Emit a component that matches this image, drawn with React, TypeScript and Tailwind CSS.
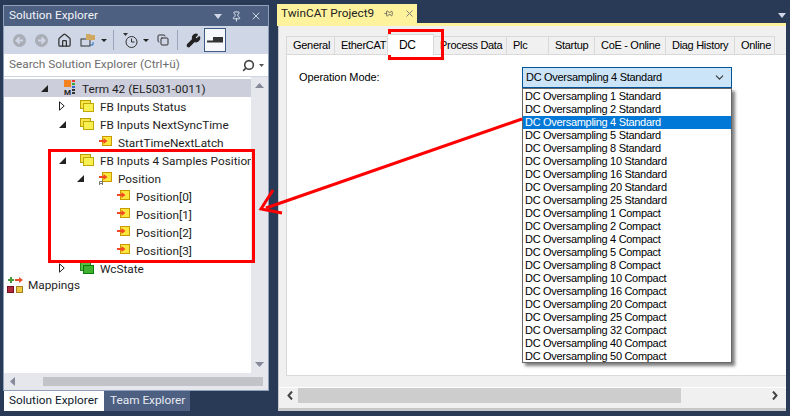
import React from 'react';
import { ChevronDown, Home, Wrench, Search, X, Pin, Copy } from 'lucide-react';

const modes = ['1 Standard', '2 Standard', '4 Standard', '5 Standard', '8 Standard', '10 Standard', '16 Standard', '20 Standard', '25 Standard', '1 Compact', '2 Compact', '4 Compact', '5 Compact', '8 Compact', '10 Compact', '16 Compact', '20 Compact', '25 Compact', '32 Compact', '40 Compact', '50 Compact'];
const tabs = [['General', 'w-[49px]'], ['EtherCAT', 'w-[55px]'], ['DC', ''], ['Process Data', 'w-[74px]'], ['Plc', 'w-[43px]'], ['Startup', 'w-[47px]'], ['CoE - Online', 'w-[72px]'], ['Diag History', 'w-[70px]'], ['Online', 'w-[41px]']];

const Folder = ({ green = false }: { green?: boolean }) => (
  <svg width="15" height="14" viewBox="0 0 15 14" className="shrink-0">
    <rect x=".5" y="1.500" width="10" height="8" fill={green ? '#58c040' : '#f5e44a'} stroke={green ? '#1c8a1c' : '#b8a000'} />
    <rect x="3.500" y="4.500" width="10" height="8" fill={green ? '#40b030' : '#f8f050'} stroke={green ? '#0c7a0c' : '#c0a800'} />
  </svg>
);

const Signal = ({ bound = false }: { bound?: boolean }) => (
  <svg width="13" height="14" viewBox="0 0 13 14" className="shrink-0">
    <rect x="3.500" y="1.500" width="9" height="9" fill="#fbe73c" stroke="#c89a00" />
    <path d="M0 5h4.500V3l4 3-4 3V7H0z" fill="#f04a22" />
    {bound && <path d="M.5 14v-3.500h3V14M.5 12.500h3" fill="none" stroke="#777" />}
  </svg>
);

const Caret = ({ open }: { open: boolean }) => open ? (
  <svg width="7" height="7" viewBox="0 0 7 7" className="shrink-0"><path d="M7 0v7H0z" fill="#222" /></svg>
) : (
  <svg width="6" height="10" viewBox="0 0 6 10" className="shrink-0"><path d="M.5.8v8.400L5.200 5z" fill="#fff" stroke="#222" /></svg>
);

const Row = ({ indent, caret, icon, label, active }: { indent: string; caret?: 'open' | 'closed'; icon: React.ReactNode; label: string; active?: boolean }) => (
  <div className={`h-[18px] flex items-center whitespace-nowrap ${active ? 'bg-[#cccedb]' : ''}`}>
    <div className={`flex items-center justify-center shrink-0 w-[10px] ${indent}`}>
      {caret && <Caret open={caret === 'open'} />}
    </div>
    <div className="ml-[12px] mr-[5px] flex items-center justify-center w-[16px] shrink-0">{icon}</div>
    <span className="pt-[4px]">{label}</span>
  </div>
);

const Nav = ({ d, cls }: { d: string; cls: string }) => (
  <svg width="13" height="13" viewBox="0 0 13 13" className={cls}>
    <circle cx="6.500" cy="6.500" r="6.500" fill="#a9adb5" />
    <path d={d} stroke="#cfd6e5" strokeWidth="2" fill="none" />
  </svg>
);

export default function App() {
  return (
    <div className="relative w-[790px] h-[416px] overflow-hidden bg-[#293a56] flex font-['Roboto',sans-serif] text-[11.8px] text-[#1e1e1e]">
      {/* solution explorer */}
      <div className="w-[266px] ml-[3px] mt-[5px] h-[406px] flex flex-col shrink-0">
        <div className="h-[21px] bg-[#4d6082] text-white flex items-center pl-[5px] pr-[6px] border-x border-t border-[#8fa0bb] shrink-0">
          <span className="text-[#f2f4f8]">Solution Explorer</span>
          <svg width="8" height="5" viewBox="0 0 8 5" className="ml-auto mr-[9px]"><path d="M0 0h8L4 5z" fill="#cfd6e5" /></svg>
          <Pin size={11} className="text-[#e6eaf2] mr-[8px]" />
          <X size={12} className="text-[#cfd6e5]" />
        </div>
        <div className="flex-1 flex flex-col bg-white border-x border-b border-[#8fa0bb] min-h-0">
          <div className="h-[28px] bg-[#cfd6e5] flex items-center pl-[9px] shrink-0">
            <Nav d="M10 6.500H4M6.500 3.500l-3 3 3 3" cls="mr-[9px]" />
            <Nav d="M3 6.500h6M6.500 3.500l3 3-3 3" cls="mr-[9px]" />
            <Home size={15} className="text-[#333] mr-[8px]" />
            <svg width="16" height="15" viewBox="0 0 16 15" className="mr-[5px]"><rect x="1" y="6" width="9" height="7" fill="none" stroke="#333" /><path d="M6 1h4l1 1h4v5H6z" fill="#d0a860" /><path d="M13 9v3h-3" stroke="#1f6fc0" fill="none" /></svg>
            <svg width="6" height="3" viewBox="0 0 6 3" className="mr-[6px]"><path d="M0 0h6L3 3z" fill="#222" /></svg>
            <div className="w-px h-[20px] bg-[#9aa5ba] mr-[9px]" />
            <svg width="15" height="17" viewBox="0 0 15 17" className="mr-[5px]">
              <path d="M0 1h5L2.500 4z" fill="#333" />
              <circle cx="8.500" cy="10" r="5.500" fill="none" stroke="#333" />
              <path d="M8.500 6.500V10h3" fill="none" stroke="#333" />
            </svg>
            <svg width="6" height="3" viewBox="0 0 6 3" className="mr-[8px]"><path d="M0 0h6L3 3z" fill="#222" /></svg>
            <Copy size={12} className="text-[#333] mr-[8px]" />
            <div className="w-px h-[20px] bg-[#9aa5ba] mr-[8px]" />
            <Wrench size={15} className="text-[#222] fill-[#222] mr-[3px]" />
            <div className="w-[22px] h-[24px] bg-[#f5f7fb] border border-[#3f5c85] flex items-center justify-center">
              <svg width="16" height="6" viewBox="0 0 16 6"><path d="M0 3.500h6v2H0zM6 0h10v5.500H6z" fill="#333" /></svg>
            </div>
          </div>
          <div className="h-[23px] bg-white flex items-center pl-[5px] pr-[4px] border-b border-[#cfd6e5] shrink-0">
            <span className="text-[#6d6d6d]">Search Solution Explorer (Ctrl+ü)</span>
            <Search size={13} strokeWidth={3} className="ml-auto text-[#444] -scale-x-100 mr-[4px]" />
            <svg width="5" height="3" viewBox="0 0 5 3"><path d="M0 0h5L2.500 3z" fill="#555" /></svg>
          </div>
          <div className="flex-1 flex min-h-0">
            <div className="flex-1 pt-[2px] min-w-0">
              <Row indent="ml-[35px]" caret="open" active label="Term 42 (EL5031-0011)" icon={
                <svg width="11" height="16" viewBox="0 0 11 16"><rect width="7" height="7" fill="#f58220" /><rect x="8" width="3" height="2" fill="#e33" /><rect x="8" y="3" width="3" height="2" fill="#3a3" /><rect x="8" y="6" width="3" height="2" fill="#36c" /><rect x="8" y="9" width="3" height="2" fill="#333" /><rect x="8" y="12" width="3" height="2" fill="#333" /><text x="0" y="15" fontSize="8" fontWeight="700" fill="#222">M</text></svg>
              } />
              <Row indent="ml-[53px]" caret="closed" icon={<Folder />} label="FB Inputs Status" />
              <Row indent="ml-[53px]" caret="open" icon={<Folder />} label="FB Inputs NextSyncTime" />
              <Row indent="ml-[71px]" icon={<Signal />} label="StartTimeNextLatch" />
              <Row indent="ml-[53px]" caret="open" icon={<Folder />} label="FB Inputs 4 Samples Position" />
              <Row indent="ml-[71px]" caret="open" icon={<Signal bound />} label="Position" />
              {[0, 1, 2, 3].map(i => <Row key={i} indent="ml-[89px]" icon={<Signal />} label={`Position[${i}]`} />)}
              <Row indent="ml-[53px]" caret="closed" icon={<Folder green />} label="WcState" />
              <div className="h-[16px] flex items-center pl-[3px]">
                <svg width="16" height="16" viewBox="0 0 16 16" className="mr-[5px] shrink-0"><path d="M3 0h2v2h2v2H5v2H3V4H1V2h2z" fill="#4a9a3a" /><path d="M8 2h4V0l4 3-4 3V4H8z" fill="#e8502a" /><rect x=".5" y="9.500" width="6" height="6" fill="#b02a3a" stroke="#701020" /><rect x="9.500" y="9.500" width="6" height="6" fill="#f0c840" stroke="#a08020" /></svg>
                <span className="pt-[2px]">Mappings</span>
              </div>
            </div>
            <div className="w-[17px] bg-[#e6e7ed] flex flex-col items-center justify-between pt-[6px] pb-[6px] shrink-0">
              <svg width="9" height="5" viewBox="0 0 9 5"><path d="M0 5h9L4.500 0z" fill="#868999" /></svg>
              <svg width="9" height="5" viewBox="0 0 9 5"><path d="M0 0h9L4.500 5z" fill="#868999" /></svg>
            </div>
          </div>
          <div className="h-[17px] bg-[#e6e7ed] flex items-center shrink-0 pl-[6px] pr-[5px]">
            <svg width="5" height="9" viewBox="0 0 5 9" className="mr-[28px]"><path d="M5 0v9L0 4.500z" fill="#868999" /></svg>
            <div className="flex-1 h-[9px] bg-[#c2c3c9]" />
          </div>
        </div>
        <div className="h-[20px] flex shrink-0 whitespace-nowrap">
          <div className="w-[100px] ml-[1px] bg-white flex items-center pl-[5px] text-[#0e1a2c]">Solution Explorer</div>
          <div className="w-[86px] bg-[#4d6082] text-[#e8ebf1] flex items-center pl-[6px]">Team Explorer</div>
        </div>
      </div>

      {/* document */}
      <div className="ml-[8px] mt-[4px] w-[509px] h-[407px] flex flex-col shrink-0">
        <div className="flex justify-between items-start h-[19px] shrink-0">
          <div className="w-[140px] h-[19px] bg-[#fff29d] flex items-center pl-[4px] text-[#222] whitespace-nowrap">
            <span>TwinCAT Project9</span>
            <Pin size={9} className="ml-[10px] shrink-0 text-[#555] rotate-90" />
            <X size={11} className="ml-[11px] shrink-0 text-[#777]" />
          </div>
          <svg width="8" height="5" viewBox="0 0 8 5" className="mt-[9px]"><path d="M0 0h8L4 5z" fill="#cfd6e5" /></svg>
        </div>
        <div className="h-[3px] bg-[#fff29d] shrink-0" />
        <div className="flex-1 bg-[#f0f0f0] border-l border-[#c8c8c8] ml-[1px] flex flex-col min-h-0 font-['Liberation_Sans',sans-serif] text-[11px] tracking-[-0.3px] text-black">
          <div className="flex-1 flex flex-col pt-[9px] pl-[7px] min-h-0">
            <div className="h-[19px] flex items-end shrink-0 whitespace-nowrap">
              {tabs.map(([t, w]) => t === 'DC' ? (
                <div key={t} className="w-[47px] h-[21px] bg-white border-x border-t border-[#d9d9d9] pl-[11px] pt-[1px] relative z-10 -ml-[1px] -mr-[1px] -mb-px text-[12px]">{t}</div>
              ) : (
                <div key={t} className={`${w} h-[18px] flex items-center pl-[6px] border border-b-0 border-[#d9d9d9] -mr-px`}>{t}</div>
              ))}
            </div>
            <div className="flex-1 bg-white border-l border-y border-[#d9d9d9] pt-[12px] pl-[12px] min-h-0">
              <div className="flex items-start">
                <span className="mt-[2px] w-[223px] shrink-0 tracking-[-0.1px]">Operation Mode:</span>
                <div className="w-[210px] h-[21px] bg-[#cce4f7] border border-[#005499] flex items-center pl-[3px] pr-[5px]">
                  <span>DC Oversampling 4 Standard</span>
                  <ChevronDown size={13} className="ml-auto text-[#333]" />
                </div>
              </div>
            </div>
          </div>
          <div className="h-[12px] bg-[#f0f0f0] border-b border-white shrink-0" />
          <div className="h-[20px] flex items-start bg-[#f0f0f0] shrink-0 pl-[8px]">
            <ChevronLeftGlyph />
            <div className="w-[383px] ml-[5px] h-[15px] bg-[#cdcdcd]" />
            <ChevronRightGlyph />
          </div>
          <div className="h-[3px] bg-[#c8c8c8] shrink-0" />
        </div>
      </div>

      {/* open dropdown list */}
      <div className="absolute left-[522px] top-[88px] w-[210px] h-[275px] pt-[1px] bg-white border border-[#666] shadow-[3px_3px_3px_rgba(0,0,0,0.5)] font-['Liberation_Sans',sans-serif] text-[11px] tracking-[-0.3px] text-black">
        {modes.map(m => (
          <div key={m} className={`h-[13px] leading-[13px] pl-[2px] whitespace-nowrap ${m === '4 Standard' ? 'bg-[#0078d7] text-white' : ''}`}>DC Oversampling {m}</div>
        ))}
      </div>

      {/* annotations */}
      <div className="absolute left-[48px] top-[149px] w-[207px] h-[114px] border-[3px] border-[#f00]" />
      <div className="absolute left-[388px] top-[29px] w-[56px] h-[31px] border-[3px] border-[#f00]" />
      <svg className="absolute left-0 top-0" width="790" height="416" viewBox="0 0 790 416">
        <path d="M522 119L266 208" stroke="#f00" strokeWidth="3" fill="none" />
        <path d="M273 190L261 209L282 213" stroke="#f00" strokeWidth="3" fill="none" />
      </svg>
    </div>
  );
}

function ChevronLeftGlyph() {
  return <svg width="6" height="9" viewBox="0 0 6 9" className="shrink-0 mt-[3px]"><path d="M5 .5L1.500 4.500 5 8.500" fill="none" stroke="#444" strokeWidth="2" /></svg>;
}

function ChevronRightGlyph() {
  return <svg width="6" height="9" viewBox="0 0 6 9" className="shrink-0 mt-[3px] ml-auto mr-[8px]"><path d="M1 .5l3.500 4-3.500 4" fill="none" stroke="#444" strokeWidth="2" /></svg>;
}
